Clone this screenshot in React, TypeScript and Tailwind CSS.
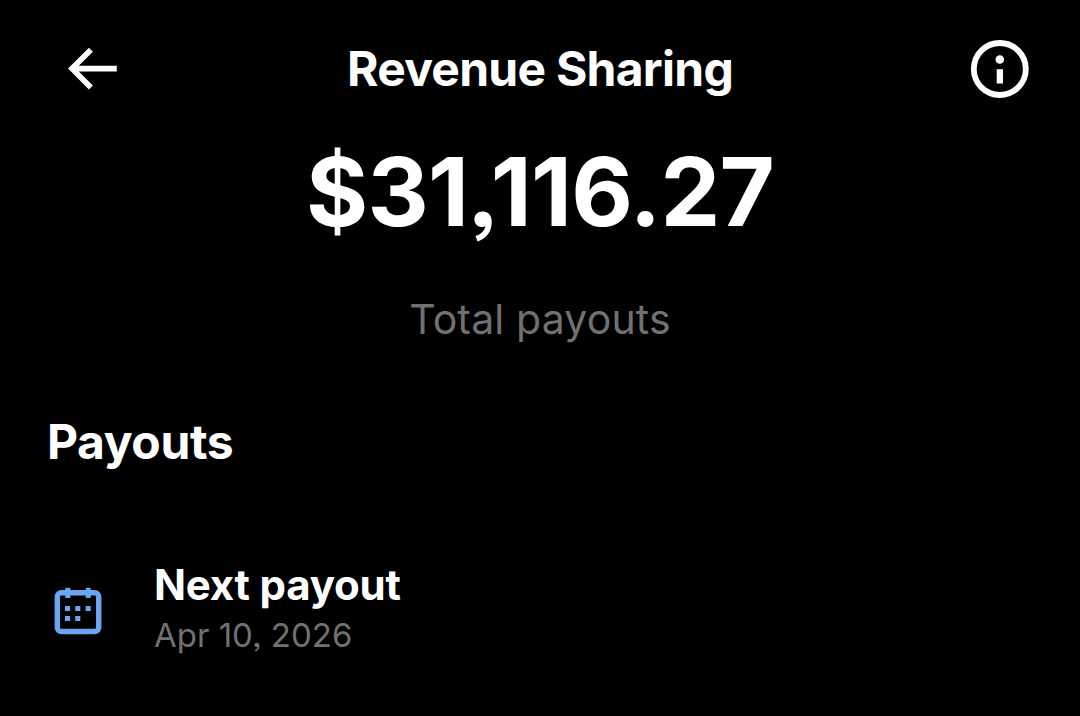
import React from 'react';

interface Payout {
  title: string;
  date: string;
}

const TOTAL = '$31,116.27';

const payouts: Payout[] = [{ title: 'Next payout', date: 'Apr 10, 2026' }];

function BackIcon() {
  return (
    <svg width="67.2" height="67.2" viewBox="0 0 24 24" fill="currentColor">
      <path d="M7.414 13l5.043 5.04-1.414 1.42L3.586 12l7.457-7.46 1.414 1.42L7.414 11H21v2H7.414z" />
    </svg>
  );
}

function InfoIcon() {
  return (
    <svg width="60" height="60" viewBox="0 0 60 60" fill="currentColor">
      <circle cx="29.8" cy="30" r="26" fill="none" stroke="currentColor" strokeWidth="5.8" />
      <circle cx="29.8" cy="20.5" r="4.3" />
      <path d="M26.7 30.2H33v14.3h-6.3z" />
    </svg>
  );
}

function CalendarIcon() {
  return (
    <svg width="56" height="56" viewBox="0 0 56 56" fill="currentColor">
      <rect x="7.3" y="9.8" width="41.4" height="38.7" rx="4" fill="none" stroke="currentColor" strokeWidth="5.4" />
      <path d="M15.3 4.7h5V15h-5zM35.7 4.7h5V15h-5z" />
      <path d="M15 23h5.1v5H15zM25.2 23h5.1v5h-5.1zM35.6 23h5.1v5h-5.1zM15 33h5.1v5H15zM25.2 33h5.1v5h-5.1z" />
    </svg>
  );
}

function PayoutRow({ title, date }: Payout) {
  return (
    <div className="flex items-center gap-12 pl-[50px]">
      <span className="text-[#6ba4f0]">
        <CalendarIcon />
      </span>
      <div className="whitespace-nowrap">
        <p className="text-[42px] leading-[48px] font-bold tracking-[-0.2px]">{title}</p>
        <p className="text-[33px] leading-[52px] text-[#717171]">{date}</p>
      </div>
    </div>
  );
}

export default function App() {
  return (
    <main className="h-[716px] w-[1080px] overflow-hidden bg-black font-['Inter','Liberation_Sans',sans-serif] text-white [font-feature-settings:'ss03']">
      <header className="grid h-[137px] grid-cols-[1fr_auto_1fr] items-center pr-[50px] pl-[58px]">
        <button aria-label="Back" className="cursor-pointer justify-self-start">
          <BackIcon />
        </button>
        <h1 className="mr-[8px] text-[48px] leading-[60px] font-bold tracking-[-0.75px] whitespace-nowrap">
          Revenue Sharing
        </h1>
        <button aria-label="Info" className="cursor-pointer justify-self-end">
          <InfoIcon />
        </button>
      </header>

      <section className="flex flex-col items-center">
        <p className="text-[95px] leading-[110px] font-bold tracking-[-0.7px]">{TOTAL}</p>
        <p className="mt-[46px] text-[41px] leading-[52px] tracking-[0.15px] text-[#717171]">Total payouts</p>
      </section>

      <section className="mt-[68px]">
        <h2 className="pl-[47px] text-[48px] leading-[57px] font-bold tracking-[-0.4px]">Payouts</h2>
        <div className="mt-[91px]">
          {payouts.map(payout => (
            <PayoutRow key={payout.title} {...payout} />
          ))}
        </div>
      </section>
    </main>
  );
}
